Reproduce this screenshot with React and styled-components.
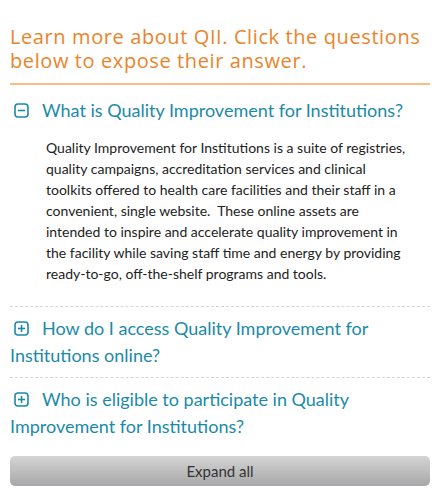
import React, { useState } from 'react';
import styled, { createGlobalStyle } from 'styled-components';

const GlobalStyle = createGlobalStyle`
  body {
    margin: 0;
    background: #fff;
    font-family: Lato, "Open Sans", sans-serif;
  }
`;

const Page = styled.div`
  width: 420px;
  padding: 0 10px;
`;

const Intro = styled.h2`
  margin: 0;
  padding: 25px 0 10px;
  font-family: "Open Sans", sans-serif;
  font-weight: 400;
  font-size: 20px;
  line-height: 24px;
  letter-spacing: 0.6px;
  color: #ea842a;
  border-bottom: 2px solid #fbbf86;
`;

const Item = styled.section`
  padding: ${({ first }) => (first ? '12px 0 12px' : '8px 0 8px')};
  border-top: ${({ first }) => (first ? 'none' : '1px dashed #d6d6d6')};
`;

const Question = styled.button`
  display: block;
  width: 100%;
  padding: 0;
  border: 0;
  background: none;
  text-align: left;
  cursor: pointer;
  font-family: Lato, sans-serif;
  font-size: 18px;
  line-height: 27px;
  color: #1b8aa8;
`;

const Icon = styled.svg`
  width: 15px;
  height: 15px;
  margin: 0 13px 0 4px;
  vertical-align: -1px;
`;

const Answer = styled.p`
  margin: 13px 20px 10px 36px;
  font-size: 14px;
  line-height: 21px;
  color: #222;
`;

const ExpandButton = styled.button`
  display: block;
  width: 100%;
  height: 30px;
  margin-top: 8px;
  padding: 0;
  border: 0;
  border-radius: 5px;
  background: linear-gradient(#d6d4d5, #a7a7a9);
  font-family: Lato, sans-serif;
  font-size: 15px;
  line-height: 30px;
  color: #333;
`;

const ToggleIcon = ({ open }) => (
  <Icon viewBox="0 0 15 15" fill="none" stroke="#1b8aa8" strokeWidth="1.6">
    <rect x="1" y="1" width="13" height="13" rx="3" />
    <line x1="4" y1="7.5" x2="11" y2="7.5" />
    {!open && <line x1="7.5" y1="4" x2="7.5" y2="11" />}
  </Icon>
);

const faqs = [
  {
    q: 'What is Quality Improvement for Institutions?',
    a: 'Quality Improvement for Institutions is a suite of registries, quality campaigns, accreditation services and clinical toolkits offered to health care facilities and their staff in a convenient, single website.\u00a0 These online assets are intended to inspire and accelerate quality improvement in the facility while saving staff time and energy by providing ready-to-go, off-the-shelf programs and tools.',
  },
  {
    q: 'How do I access Quality Improvement for Institutions online?',
    a: '',
  },
  {
    q: 'Who is eligible to participate in Quality Improvement for Institutions?',
    a: '',
  },
];

const App = () => {
  const [open, setOpen] = useState([true, false, false]);
  const toggle = (i) => setOpen(open.map((o, j) => (j === i ? !o : o)));

  return (
    <>
      <GlobalStyle />
      <Page>
        <Intro>Learn more about QII. Click the questions below to expose their answer.</Intro>
        {faqs.map((f, i) => (
          <Item key={i} first={i === 0}>
            <Question onClick={() => toggle(i)}>
              <ToggleIcon open={open[i]} />
              {f.q}
            </Question>
            {open[i] && <Answer>{f.a}</Answer>}
          </Item>
        ))}
        <ExpandButton onClick={() => setOpen(faqs.map(() => true))}>Expand all</ExpandButton>
      </Page>
    </>
  );
};

export default App;
